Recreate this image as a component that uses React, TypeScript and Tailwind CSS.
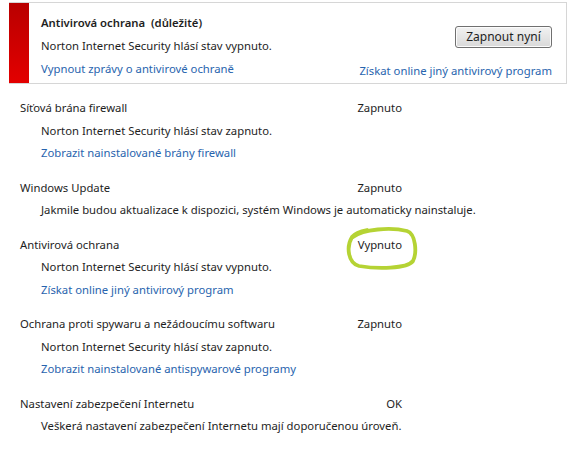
import React from "react";

const font = { fontFamily: '"Segoe UI", "Noto Sans", "Open Sans", sans-serif' };

type Row = {
  title: string;
  status: string;
  text: string;
  link?: string;
  circled?: boolean;
};

const rows: Row[] = [
  {
    title: "Síťová brána firewall",
    status: "Zapnuto",
    text: "Norton Internet Security hlásí stav zapnuto.",
    link: "Zobrazit nainstalované brány firewall",
  },
  {
    title: "Windows Update",
    status: "Zapnuto",
    text: "Jakmile budou aktualizace k dispozici, systém Windows je automaticky nainstaluje.",
  },
  {
    title: "Antivirová ochrana",
    status: "Vypnuto",
    text: "Norton Internet Security hlásí stav vypnuto.",
    link: "Získat online jiný antivirový program",
    circled: true,
  },
  {
    title: "Ochrana proti spywaru a nežádoucímu softwaru",
    status: "Zapnuto",
    text: "Norton Internet Security hlásí stav zapnuto.",
    link: "Zobrazit nainstalované antispywarové programy",
  },
  {
    title: "Nastavení zabezpečení Internetu",
    status: "OK",
    text: "Veškerá nastavení zabezpečení Internetu mají doporučenou úroveň.",
  },
];

function Circle() {
  return (
    <svg className="absolute -left-[15px] -top-[9px] pointer-events-none" width="76" height="46" viewBox="0 0 76 46">
      <path
        d="M10 12 C20 4, 48 2, 64 6 C73 9, 74 28, 70 36 C64 44, 34 44, 16 41 C5 38, 3 22, 9 12 C12 8, 18 6, 24 5"
        fill="none"
        stroke="#b5d334"
        strokeWidth="3.8"
        strokeLinecap="round"
      />
    </svg>
  );
}

export default function App() {
  return (
    <div className="w-[583px] h-[449px] bg-white text-[11.3px] text-[#1e1e1e] pt-[2px]" style={font}>
      {/* warning panel */}
      <div className="ml-[9px] w-[558px] h-[82px] flex border border-l-0 border-[#d6d6d6]">
        <div className="w-[20px] bg-gradient-to-b from-[#b90000] to-[#e30000]" />
        <div className="flex-1 flex justify-between pl-[12px] pr-[14px] pt-[8px] leading-[23px]">
          <div>
            <div className="font-semibold">Antivirová ochrana&nbsp; (důležité)</div>
            <div>Norton Internet Security hlásí stav vypnuto.</div>
            <div className="text-[#2864ae]">Vypnout zprávy o antivirové ochraně</div>
          </div>
          <div className="flex flex-col items-end">
            <button className="mt-[15px] h-[22px] w-[97px] rounded-[3px] border border-[#707070] bg-gradient-to-b from-[#f2f2f2] to-[#d9d9d9] text-[12px] leading-[20px] text-[#1e1e1e] shadow-[inset_0_0_0_1px_#fcfcfc]">
              Zapnout nyní
            </button>
            <div className="mt-[11px] text-[#2864ae]">Získat online jiný antivirový program</div>
          </div>
        </div>
      </div>

      {/* status rows */}
      <div className="mt-[13px] flex flex-col gap-[12px] leading-[22.5px]">
        {rows.map((r) => (
          <div key={r.title}>
            <div className="flex">
              <div className="w-[330px] pl-[20px]">{r.title}</div>
              <div className="w-[72px] text-right">
                <span className="relative inline-block">
                  {r.circled && <Circle />}
                  {r.status}
                </span>
              </div>
            </div>
            <div className="pl-[41px]">{r.text}</div>
            {r.link && <div className="pl-[41px] text-[#2864ae]">{r.link}</div>}
          </div>
        ))}
      </div>
    </div>
  );
}
